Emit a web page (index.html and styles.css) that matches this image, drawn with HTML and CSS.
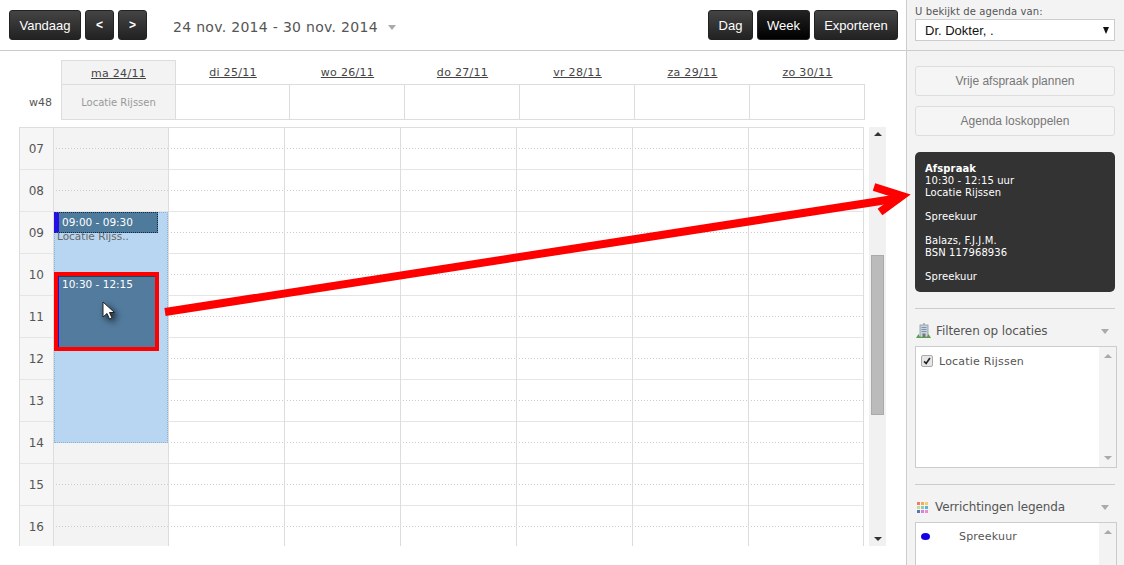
FILE: index.html
```html
<!DOCTYPE html>
<html lang="nl">
<head>
    <meta charset="UTF-8">
    <title>Agenda</title>
    <link rel="stylesheet" href="styles.css">
</head>
<body>
    <div class="main">
        <div class="toolbar">
            <button class="btn">Vandaag</button>
            <button class="btn btn-nav">&lt;</button>
            <button class="btn btn-nav">&gt;</button>
            <div class="range">24 nov. 2014 - 30 nov. 2014 <span class="caret"></span></div>
            <div class="views">
                <button class="btn btn-day">Dag</button>
                <button class="btn btn-week">Week</button>
                <button class="btn btn-export">Exporteren</button>
            </div>
        </div>

        <div class="week-head">
            <div class="corner"></div>
            <div class="day-name today"><a href="#">ma 24/11</a></div>
            <div class="day-name"><a href="#">di 25/11</a></div>
            <div class="day-name"><a href="#">wo 26/11</a></div>
            <div class="day-name"><a href="#">do 27/11</a></div>
            <div class="day-name"><a href="#">vr 28/11</a></div>
            <div class="day-name"><a href="#">za 29/11</a></div>
            <div class="day-name"><a href="#">zo 30/11</a></div>
            <div class="week-no">w48</div>
            <div class="loc today">Locatie Rijssen</div>
            <div class="loc"></div>
            <div class="loc"></div>
            <div class="loc"></div>
            <div class="loc"></div>
            <div class="loc"></div>
            <div class="loc"></div>
        </div>

        <div class="cal-body">
            <div class="cal-grid">
                <div class="hours">
                    <div class="hour">07</div>
                    <div class="hour">08</div>
                    <div class="hour">09</div>
                    <div class="hour">10</div>
                    <div class="hour">11</div>
                    <div class="hour">12</div>
                    <div class="hour">13</div>
                    <div class="hour">14</div>
                    <div class="hour">15</div>
                    <div class="hour">16</div>
                </div>
                <div class="day today">
                    <div class="slot"></div><div class="slot"></div><div class="slot"></div><div class="slot"></div><div class="slot"></div>
                    <div class="slot"></div><div class="slot"></div><div class="slot"></div><div class="slot"></div><div class="slot"></div>
                    <div class="block">
                        <div class="block-loc">Locatie Rijss..</div>
                    </div>
                    <div class="event event-first">09:00 - 09:30</div>
                    <div class="event event-second">10:30 - 12:15</div>
                    <svg class="pointer" width="22" height="26" viewBox="0 0 22 26">
                        <path d="M2 2 L2 17 L6 13.5 L8.5 19 L11 18 L8.5 12.5 L13.5 12.5 Z" fill="#fff" stroke="#222" stroke-width="1"/>
                    </svg>
                </div>
                <div class="day">
                    <div class="slot"></div><div class="slot"></div><div class="slot"></div><div class="slot"></div><div class="slot"></div>
                    <div class="slot"></div><div class="slot"></div><div class="slot"></div><div class="slot"></div><div class="slot"></div>
                </div>
                <div class="day">
                    <div class="slot"></div><div class="slot"></div><div class="slot"></div><div class="slot"></div><div class="slot"></div>
                    <div class="slot"></div><div class="slot"></div><div class="slot"></div><div class="slot"></div><div class="slot"></div>
                </div>
                <div class="day">
                    <div class="slot"></div><div class="slot"></div><div class="slot"></div><div class="slot"></div><div class="slot"></div>
                    <div class="slot"></div><div class="slot"></div><div class="slot"></div><div class="slot"></div><div class="slot"></div>
                </div>
                <div class="day">
                    <div class="slot"></div><div class="slot"></div><div class="slot"></div><div class="slot"></div><div class="slot"></div>
                    <div class="slot"></div><div class="slot"></div><div class="slot"></div><div class="slot"></div><div class="slot"></div>
                </div>
                <div class="day">
                    <div class="slot"></div><div class="slot"></div><div class="slot"></div><div class="slot"></div><div class="slot"></div>
                    <div class="slot"></div><div class="slot"></div><div class="slot"></div><div class="slot"></div><div class="slot"></div>
                </div>
                <div class="day">
                    <div class="slot"></div><div class="slot"></div><div class="slot"></div><div class="slot"></div><div class="slot"></div>
                    <div class="slot"></div><div class="slot"></div><div class="slot"></div><div class="slot"></div><div class="slot"></div>
                </div>
            </div>
            <div class="scrollbar">
                <span class="arrow-up dark"></span>
                <div class="thumb-track"><div class="thumb"></div></div>
                <span class="arrow-down dark"></span>
            </div>
        </div>
    </div>

    <div class="side">
        <div class="side-top">
            <label class="side-label">U bekijkt de agenda van:</label>
            <div class="select">Dr. Dokter, .<span class="select-caret"></span></div>
        </div>
        <div class="side-body">
            <button class="btn-light">Vrije afspraak plannen</button>
            <button class="btn-light">Agenda loskoppelen</button>
            <div class="info">
                <strong>Afspraak</strong><br>
                10:30 - 12:15 uur<br>
                Locatie Rijssen<br>
                <br>
                Spreekuur<br>
                <br>
                Balazs, F.J.J.M.<br>
                BSN 117968936<br>
                <br>
                Spreekuur
            </div>

            <div class="panel">
                <div class="panel-head">
                    <svg class="panel-icon" width="15" height="16" viewBox="0 0 15 16">
                        <rect x="4" y="2" width="8" height="12" fill="#c9d4de" stroke="#8a97a3" stroke-width="0.8"/>
                        <path d="M5.5 4.5h5M5.5 6.5h5M5.5 8.5h5" stroke="#7f95ab" stroke-width="1"/>
                        <rect x="6.5" y="10.5" width="3" height="3.5" fill="#777"/>
                        <path d="M8 0v2" stroke="#888" stroke-width="1"/>
                        <path d="M0 15 L2.5 11 L4 14 L11 14 L12.5 11 L15 15 Z" fill="#5aa04a"/>
                    </svg>
                    <span class="panel-title">Filteren op locaties</span>
                    <span class="panel-caret"></span>
                </div>
                <div class="list-box list-filter">
                    <div class="list-item">
                        <span class="check">
                            <svg width="12" height="12" viewBox="0 0 12 12">
                                <path d="M2.5 6.5 L5 9 L9.5 2.5" fill="none" stroke="#222" stroke-width="2"/>
                            </svg>
                        </span>
                        <span>Locatie Rijssen</span>
                    </div>
                    <div class="list-scroll">
                        <span class="arrow-up"></span>
                        <span class="arrow-down"></span>
                    </div>
                </div>
            </div>

            <div class="panel">
                <div class="panel-head">
                    <div class="swatches">
                        <i class="sw-red"></i><i class="sw-orange"></i><i class="sw-yellow"></i>
                        <i class="sw-green"></i><i class="sw-lime"></i><i class="sw-blue"></i>
                        <i class="sw-teal"></i><i class="sw-pink"></i><i class="sw-purple"></i>
                    </div>
                    <span class="panel-title">Verrichtingen legenda</span>
                    <span class="panel-caret"></span>
                </div>
                <div class="list-box list-legend">
                    <div class="list-item">
                        <span class="dot"></span>
                        <span class="legend-name">Spreekuur</span>
                    </div>
                    <div class="list-scroll">
                        <span class="arrow-up"></span>
                    </div>
                </div>
            </div>
        </div>
    </div>

    <svg class="annotation" width="1124" height="565" viewBox="0 0 1124 565">
        <path d="M165 312 L900 198" stroke="#f00" stroke-width="8" fill="none"/>
        <path d="M874 187 L902 196 L880 212" stroke="#f00" stroke-width="8" fill="none"/>
    </svg>
</body>
</html>
```

FILE: styles.css
```css
* {
    margin: 0;
    padding: 0;
    box-sizing: border-box;
}

body {
    width: 1124px;
    height: 565px;
    overflow: hidden;
    display: flex;
    position: relative;
    background: #fff;
    color: #444;
    font-family: "DejaVu Sans", Verdana, sans-serif;
    font-size: 11px;
}

/* left part */
.main {
    width: 906px;
    height: 565px;
    overflow: hidden;
}

.toolbar {
    height: 51px;
    padding: 10px 8px 0 9px;
    display: flex;
    align-items: flex-start;
    gap: 4px;
    border-bottom: 1px solid #ccc;
}

.btn {
    height: 30px;
    width: 72px;
    border: 1px solid #222;
    border-radius: 3px;
    background: linear-gradient(#444, #222);
    color: #fff;
    font-family: "Liberation Sans", Arial, sans-serif;
    font-size: 13px;
    cursor: pointer;
}

.btn-nav {
    width: 29px;
    font-weight: bold;
    font-size: 12px;
}

.btn-day { width: 45px; }
.btn-week { width: 53px; background: linear-gradient(#222, #000); }
.btn-export { width: 84px; }

.range {
    margin: 9px 0 0 22px;
    font-size: 14px;
    letter-spacing: 0.3px;
    color: #555;
}

.caret {
    display: inline-block;
    margin-left: 5px;
    vertical-align: 2px;
    border-left: 4px solid transparent;
    border-right: 4px solid transparent;
    border-top: 5px solid #aaa;
}

.views {
    margin-left: auto;
    display: flex;
    gap: 4px;
}

/* week header */
.week-head {
    display: grid;
    grid-template-columns: 61px 115px 114px 115px 115px 115px 115px 115px;
    grid-template-rows: 25px 35px;
    width: 865px;
    margin-top: 9px;
}

.day-name {
    text-align: center;
    padding-top: 6px;
    letter-spacing: 0.3px;
    border-bottom: 1px solid #ddd;
}

.day-name a {
    color: #444;
}

.day-name.today {
    background: #f3f3f3;
    border: 1px solid #ddd;
}

.week-no {
    text-align: right;
    padding: 11px 9px 0 0;
    color: #555;
}

.loc {
    border-right: 1px solid #ddd;
    border-bottom: 1px solid #ddd;
}

.loc.today {
    background: #f3f3f3;
    border-left: 1px solid #ddd;
    color: #999;
    font-size: 10px;
    text-align: center;
    padding-top: 12px;
}

/* calendar */
.cal-body {
    display: flex;
    gap: 5px;
    margin: 7px 0 0 19px;
    height: 419px;
}

.cal-grid {
    display: grid;
    grid-template-columns: 34px 115px 116px 116px 116px 116px 116px 116px;
    width: 845px;
    border-top: 1px solid #ddd;
    overflow: hidden;
}

.hours {
    background: #f6f6f6;
    border-left: 1px solid #ddd;
}

.hour {
    height: 42px;
    padding-top: 14px;
    padding-right: 9px;
    text-align: right;
    font-size: 12px;
    color: #555;
    border-bottom: 1px solid #e5e5e5;
}

.day {
    position: relative;
    border-left: 1px solid #ddd;
}

.day:last-child {
    border-right: 1px solid #ddd;
}

.day.today {
    background-color: #f3f3f3;
    border-right: 1px solid #ddd;
    margin-right: -1px;
}

.slot {
    height: 42px;
    border-bottom: 1px solid #e5e5e5;
    background: repeating-linear-gradient(90deg, #ccc 0 1px, transparent 1px 3px) 2px 20px / 100% 1px no-repeat;
}

.block {
    position: absolute;
    left: 0;
    right: 0;
    top: 84px;
    height: 231px;
    background: #b8d6f2;
    border: 1px dotted #8fb2d2;
}

.block-loc {
    margin: 20px 0 0 2px;
    color: #666;
    font-size: 10.5px;
    height: 10px;
    line-height: 7px;
    overflow: hidden;
}

.event {
    position: absolute;
    color: #fff;
    font-size: 10.5px;
    background: #4e7a9c;
}

.event-first {
    left: 0;
    top: 84px;
    width: 104px;
    height: 21px;
    padding: 3px 0 0 3px;
    border: 1px dotted #0d2b45;
    border-left: 5px solid #2410e6;
}

.event-second {
    left: 0;
    top: 144px;
    width: 105px;
    height: 79px;
    padding: 2px 0 0 4px;
    background: #527b9e;
    border: 4px solid #f00;
    box-shadow: inset 1px 0 0 #2410e6, inset 0 1px 0 #1f4560;
}

.pointer {
    position: absolute;
    left: 47px;
    top: 172px;
    filter: drop-shadow(3px 3px 3px rgba(0, 0, 0, 0.7));
}

.scrollbar {
    width: 17px;
    height: 419px;
    background: #f1f1f1;
    display: flex;
    flex-direction: column;
    align-items: center;
    padding: 5px 0;
}

.thumb-track {
    flex: 1;
    width: 100%;
    padding-top: 119px;
    display: flex;
    justify-content: center;
}

.thumb {
    width: 13px;
    height: 160px;
    background: #bbb;
    border: 1px solid #aaa;
}

.arrow-up,
.arrow-down {
    display: block;
    border-left: 4px solid transparent;
    border-right: 4px solid transparent;
}

.arrow-up { border-bottom: 4px solid #aaa; }
.arrow-down { border-top: 4px solid #aaa; }
.arrow-up.dark { border-bottom-color: #333; }
.arrow-down.dark { border-top-color: #333; }

/* right part */
.side {
    width: 218px;
    height: 565px;
    overflow: hidden;
    background: #f3f3f3;
    border-left: 1px solid #ccc;
}

.side-top {
    height: 51px;
    padding: 6px 8px 0 8px;
    border-bottom: 1px solid #ccc;
}

.side-label {
    display: block;
    font-size: 10px;
    letter-spacing: 0.1px;
    color: #555;
    height: 13px;
}

.select {
    width: 200px;
    height: 22px;
    background: #fff;
    border: 1px solid #ccc;
    padding: 3px 0 0 9px;
    color: #111;
    font-family: "Liberation Sans", Arial, sans-serif;
    font-size: 13px;
    position: relative;
}

.select-caret {
    position: absolute;
    right: 5px;
    top: 7px;
    border-left: 3.5px solid transparent;
    border-right: 3.5px solid transparent;
    border-top: 7px solid #111;
}

.side-body {
    padding: 15px 8px 0 8px;
    display: flex;
    flex-direction: column;
}

.btn-light {
    width: 200px;
    height: 30px;
    margin-bottom: 10px;
    background: #f5f5f5;
    border: 1px solid #ddd;
    border-radius: 3px;
    color: #777;
    font-family: "Liberation Sans", Arial, sans-serif;
    font-size: 12px;
    cursor: pointer;
}

.info {
    width: 200px;
    height: 140px;
    margin-top: 6px;
    padding: 11px 10px;
    background: #333;
    border-radius: 5px;
    color: #fff;
    font-size: 10px;
    line-height: 12px;
    letter-spacing: 0.1px;
}

.panel {
    width: 200px;
    margin-top: 16px;
    border-top: 1px solid #ccc;
}

.panel-head {
    height: 37px;
    display: flex;
    align-items: center;
    padding-top: 7px;
}

.panel-icon {
    margin: 0 5px 0 1px;
}

.panel-title {
    font-size: 12px;
    letter-spacing: -0.1px;
    color: #555;
}

.panel-caret {
    margin-left: auto;
    margin-right: 6px;
    border-left: 4px solid transparent;
    border-right: 4px solid transparent;
    border-top: 5px solid #aaa;
}

.swatches {
    display: grid;
    grid-template-columns: repeat(3, 3px);
    grid-auto-rows: 3px;
    gap: 1px;
    margin: 0 7px 0 2px;
}

.swatches i { display: block; }
.sw-red { background: #f07a6c; }
.sw-orange { background: #f5a860; }
.sw-yellow { background: #f0d060; }
.sw-green { background: #c0e090; }
.sw-lime { background: #90d0a0; }
.sw-blue { background: #60b0e8; }
.sw-teal { background: #5a78b0; }
.sw-pink { background: #d880e0; }
.sw-purple { background: #e890c8; }

.list-box {
    display: flex;
    justify-content: space-between;
    width: 202px;
    background: #fff;
    border: 1px solid #ccc;
}

.list-filter {
    height: 122px;
}

.list-legend {
    height: 60px;
}

.list-item {
    display: flex;
    align-items: center;
    height: 14px;
    margin: 7px 0 0 5px;
    color: #555;
    letter-spacing: 0.2px;
}

.list-legend .list-item {
    margin-top: 6px;
}

.check {
    width: 12px;
    height: 12px;
    margin-right: 6px;
    background: #e6e6e6;
    border: 1px solid #aaa;
    border-radius: 2px;
    display: flex;
    align-items: center;
    justify-content: center;
}

.dot {
    width: 9px;
    height: 7px;
    border-radius: 50%;
    background: #1400e6;
}

.legend-name {
    margin-left: 29px;
}

.list-scroll {
    width: 17px;
    background: #f3f3f3;
    display: flex;
    flex-direction: column;
    justify-content: space-between;
    align-items: center;
    padding: 7px 0;
}

/* red arrow drawn over the screenshot */
.annotation {
    position: absolute;
    left: 0;
    top: 0;
    pointer-events: none;
}
```
